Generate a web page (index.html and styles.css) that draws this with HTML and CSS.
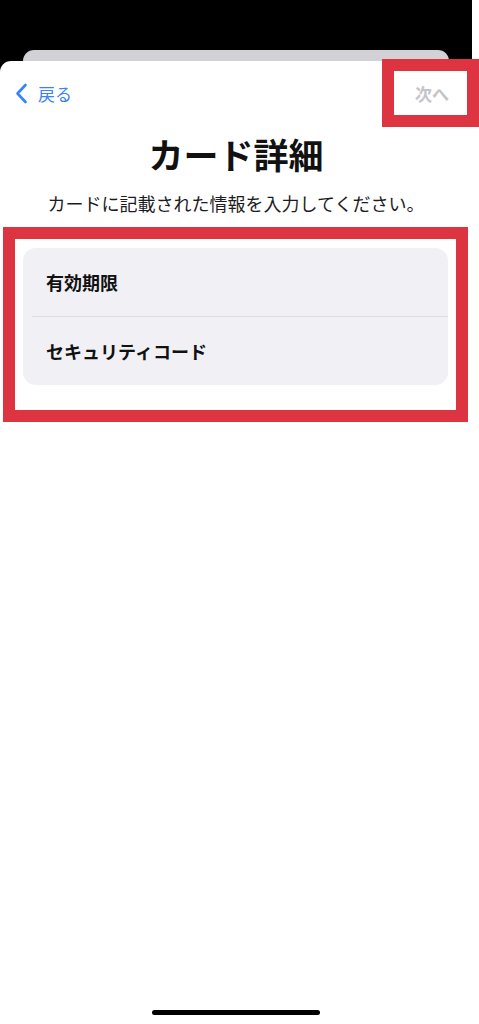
FILE: index.html
```html
<!DOCTYPE html>
<html>

<head>
  <meta charset="utf-8">
  <meta name="viewport" content="width=device-width, initial-scale=1">
  <title>カード詳細</title>
  <link rel="stylesheet" href="styles.css">
</head>

<body>
  <div class="phone">
    <div class="peek"></div>
    <div class="sheet">
      <div class="nav">
        <a class="back" href="#">
          <svg class="chevron" width="13" height="21" viewBox="0 0 13 21">
            <path d="M10.5 2 L2.5 10.5 L10.5 19" fill="none" stroke="#3a82f7" stroke-width="2.6" stroke-linecap="round" stroke-linejoin="round"/>
          </svg>
          <span>戻る</span>
        </a>
        <div class="next mark">次へ</div>
      </div>

      <h1 class="title">カード詳細</h1>
      <p class="lead">カードに記載された情報を入力してください。</p>

      <div class="fields mark">
        <div class="group">
          <div class="row">有効期限</div>
          <div class="sep"></div>
          <div class="row">セキュリティコード</div>
        </div>
      </div>

      <div class="home"></div>
    </div>
  </div>
</body>

</html>
```

FILE: styles.css
```css
* {
  box-sizing: border-box;
}

html {
  background: #fff;
}

body {
  margin: 0;
  font-family: "Noto Sans CJK JP", "Noto Sans", sans-serif;
  color: #111;
}

.phone {
  width: 472px;
  background: #000;
  padding-top: 50px;
}

.peek {
  margin: 0 23px;
  height: 21px;
  background: #d1d1d6;
  border-radius: 11px 11px 0 0;
}

.sheet {
  position: relative;
  margin-top: -10px;
  height: 963px;
  background: #fff;
  border-radius: 11px 11px 0 0;
  display: flex;
  flex-direction: column;
}

.mark {
  border: 12px solid #dc3441;
}

.nav {
  display: flex;
  justify-content: space-between;
  align-items: center;
  height: 68px;
  margin-top: -2px;
}

.back {
  display: flex;
  align-items: center;
  gap: 10px;
  padding-left: 15px;
  color: #3a82f7;
  text-decoration: none;
  font-size: 17px;
}

.chevron {
  display: block;
}

.next {
  width: 97px;
  height: 68px;
  margin-right: -7px;
  display: flex;
  align-items: center;
  justify-content: center;
  padding-left: 3px;
  background: #fff;
  color: #c4c4c8;
  font-size: 17px;
  font-weight: 600;
}

.title {
  margin: 6px 0 0;
  text-align: center;
  font-size: 35px;
  line-height: 42px;
  font-weight: 700;
}

.lead {
  margin: 16px 0 0;
  text-align: center;
  font-size: 18px;
  line-height: 24px;
  color: #1c1c1e;
}

.fields {
  margin: 12px 4px 0 3px;
  padding: 9px 8px 25px;
}

.group {
  background: #f0f0f5;
  border-radius: 13px;
  overflow: hidden;
}

.row {
  height: 68px;
  display: flex;
  align-items: center;
  padding-left: 23px;
  font-size: 18px;
  font-weight: 700;
}

.sep {
  height: 1px;
  margin-left: 9px;
  background: #dcdce1;
}

.home {
  margin: auto auto 9px;
  width: 168px;
  height: 5px;
  border-radius: 3px;
  background: #000;
}
```
